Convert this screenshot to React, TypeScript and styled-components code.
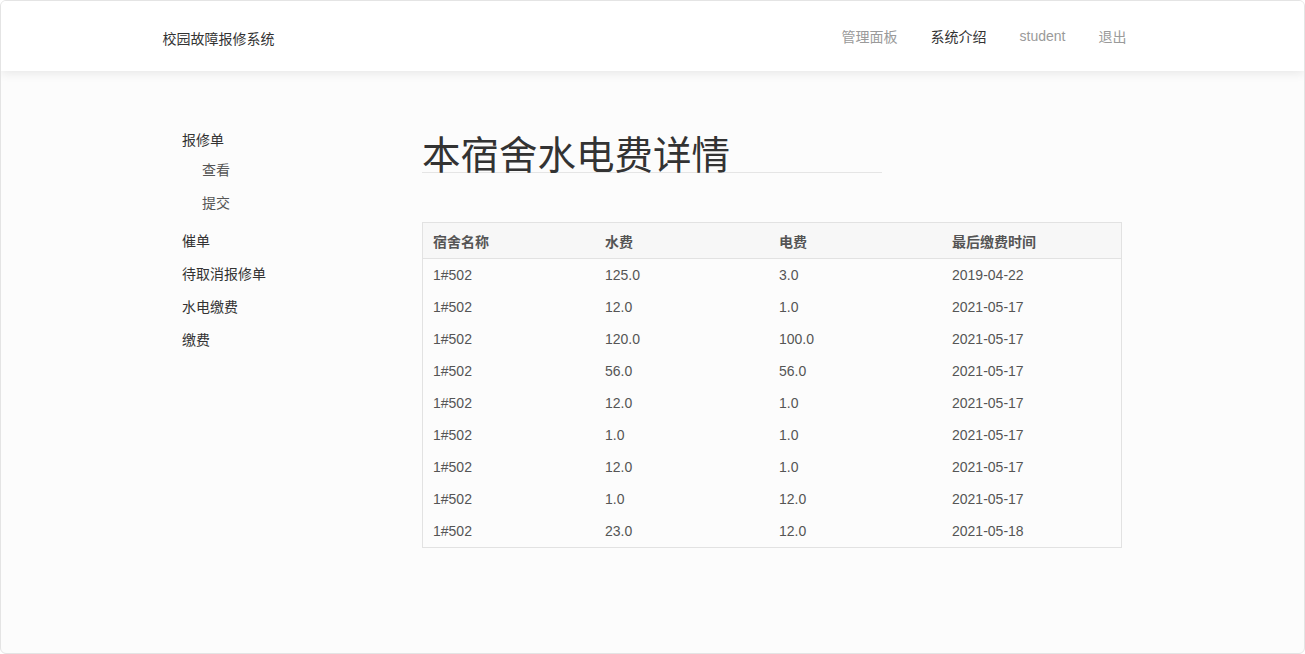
import * as React from 'react';
import styled, { createGlobalStyle } from 'styled-components';

const GlobalStyle = createGlobalStyle`
    html,
    body {
        margin: 0;
        padding: 0;
        background: #ffffff;
        font-family: 'Liberation Sans', Arial, 'Noto Sans CJK SC', sans-serif;
        font-size: 14px;
        color: #333;
    }
`;

const Frame = styled.div`
    box-sizing: border-box;
    width: 1305px;
    height: 654px;
    border: 1px solid #e4e4e4;
    border-radius: 6px;
    background: #fcfcfc;
    overflow: hidden;
`;

const Header = styled.header`
    height: 70px;
    background: #ffffff;
    box-shadow: 0 2px 10px rgba(0, 0, 0, 0.09);
    position: relative;
`;

const Container = styled.div`
    width: 980px;
    margin: 0 auto;
`;

const HeaderInner = styled(Container)`
    height: 100%;
    display: flex;
    align-items: center;
    justify-content: space-between;
`;

const Brand = styled.div`
    font-size: 14px;
    color: #333;
    margin-top: 4px;
`;

const Nav = styled.nav`
    display: flex;
    align-items: center;
`;

const NavLink = styled.a<{ $active?: boolean }>`
    padding: 0 16.5px;
    font-size: 14px;
    color: ${(p) => (p.$active ? '#333' : '#9a9a9a')};
    text-decoration: none;

    &:last-child {
        padding-right: 16px;
    }
`;

const Body = styled(Container)`
    display: flex;
    padding-top: 53px;
`;

const Sidebar = styled.aside`
    width: 259.5px;
    flex-shrink: 0;
    padding-left: 19.5px;
    box-sizing: border-box;
`;

const SideItem = styled.div<{ $sub?: boolean }>`
    height: 33px;
    line-height: 33px;
    font-size: 14px;
    color: ${(p) => (p.$sub ? '#555' : '#333')};
    padding-left: ${(p) => (p.$sub ? '20px' : '0')};
`;

const SubList = styled.div`
    margin: -3px 0 5px;
`;

const Main = styled.main`
    flex: 1;
    padding-top: 8px;
`;

const Title = styled.h1`
    width: 460px;
    margin: 0;
    font-size: 38.5px;
    font-weight: normal;
    line-height: 40px;
    color: #333;
    border-bottom: 1px solid #e5e5e5;
    font-family: 'Noto Sans CJK SC', sans-serif;
`;

const Table = styled.table`
    margin-top: 49px;
    width: 700px;
    border-collapse: collapse;
    border: 1px solid #e2e2e2;
    table-layout: fixed;

    th,
    td {
        padding: 0 10px;
        text-align: left;
        font-size: 14px;
        color: #555;
    }

    th {
        height: 35px;
        font-weight: bold;
        background: #f7f7f7;
        border-bottom: 1px solid #e2e2e2;
    }

    td {
        height: 32px;
    }
`;

const rows = [
    ['125.0', '3.0', '2019-04-22'],
    ['12.0', '1.0', '2021-05-17'],
    ['120.0', '100.0', '2021-05-17'],
    ['56.0', '56.0', '2021-05-17'],
    ['12.0', '1.0', '2021-05-17'],
    ['1.0', '1.0', '2021-05-17'],
    ['12.0', '1.0', '2021-05-17'],
    ['1.0', '12.0', '2021-05-17'],
    ['23.0', '12.0', '2021-05-18'],
];

function App() {
    return (
        <>
            <GlobalStyle />
            <Frame>
                <Header>
                    <HeaderInner>
                        <Brand>校园故障报修系统</Brand>
                        <Nav>
                            <NavLink>管理面板</NavLink>
                            <NavLink $active>系统介绍</NavLink>
                            <NavLink>student</NavLink>
                            <NavLink>退出</NavLink>
                        </Nav>
                    </HeaderInner>
                </Header>
                <Body>
                    <Sidebar>
                        <SideItem>报修单</SideItem>
                        <SubList>
                            <SideItem $sub>查看</SideItem>
                            <SideItem $sub>提交</SideItem>
                        </SubList>
                        <SideItem>催单</SideItem>
                        <SideItem>待取消报修单</SideItem>
                        <SideItem>水电缴费</SideItem>
                        <SideItem>缴费</SideItem>
                    </Sidebar>
                    <Main>
                        <Title>本宿舍水电费详情</Title>
                        <Table>
                            <thead>
                                <tr>
                                    <th style={{ width: '152px' }}>宿舍名称</th>
                                    <th style={{ width: '154px' }}>水费</th>
                                    <th style={{ width: '153px' }}>电费</th>
                                    <th>最后缴费时间</th>
                                </tr>
                            </thead>
                            <tbody>
                                {rows.map((r, i) => (
                                    <tr key={i}>
                                        <td>1#502</td>
                                        <td>{r[0]}</td>
                                        <td>{r[1]}</td>
                                        <td>{r[2]}</td>
                                    </tr>
                                ))}
                            </tbody>
                        </Table>
                    </Main>
                </Body>
            </Frame>
        </>
    );
}

export default App;
